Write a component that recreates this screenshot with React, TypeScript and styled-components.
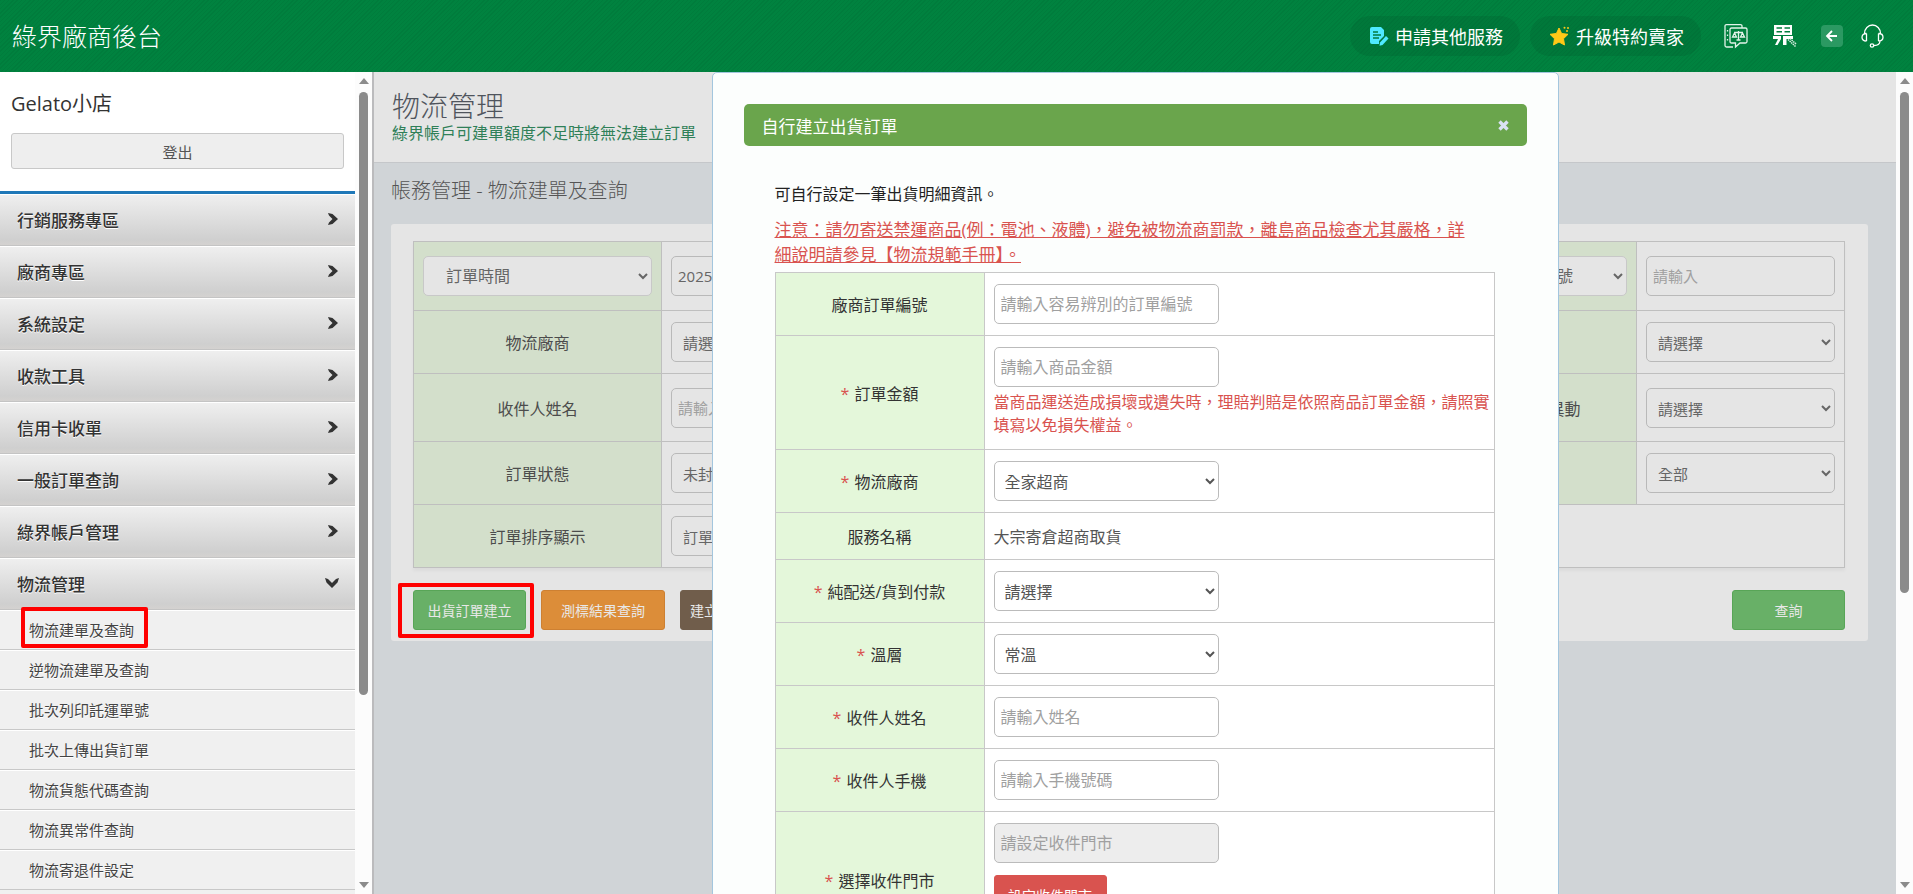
import React from "react";
import styled, { createGlobalStyle, css } from "styled-components";

const GlobalStyle = createGlobalStyle`
  * { box-sizing: border-box; }
  body { margin: 0; overflow: hidden; }
  body, button, input, select {
    font-family: "Open Sans", "Noto Sans CJK TC", sans-serif;
  }
`;

const Page = styled.div`
  display: flex;
  flex-direction: column;
  height: 100vh;
  background: #fff;
  color: #333;
  font-size: 16px;
`;

const TopBar = styled.header`
  display: flex;
  align-items: center;
  flex: none;
  height: 72px;
  padding: 0 29px 0 12px;
  background: repeating-linear-gradient(135deg, #007c3c 0 1px, #00823f 1px 3px);
  color: #fff;
`;

const Brand = styled.h1`
  flex: 1;
  margin: 0;
  font-size: 25px;
  font-weight: 300;
  line-height: 32px;
`;

const PillButton = styled.button`
  display: flex;
  align-items: center;
  gap: 6px;
  height: 40px;
  margin-right: 10px;
  padding: 0 17px 0 20px;
  border: 0;
  border-radius: 20px;
  background: rgba(0, 70, 40, 0.16);
  color: #fff;
  font-size: 18px;
  white-space: nowrap;
`;

const TopIcons = styled.div`
  display: grid;
  grid-template-columns: 49px 48px 40px 23px;
  align-items: center;
  margin-left: 13px;
`;

const IconButton = styled.button`
  display: flex;
  padding: 0;
  border: 0;
  background: none;
`;

const Body = styled.div`
  display: flex;
  flex: 1;
  min-height: 0;
`;

const Sidebar = styled.aside`
  flex: none;
  width: 355px;
  overflow: hidden;
  background: #f0f0f0;
`;

const Account = styled.div`
  display: flex;
  flex-direction: column;
  gap: 14px;
  height: 122px;
  padding: 17px 11px 0;
  border-bottom: 3px solid #1f78b8;
  background: #fff;
`;

const ShopName = styled.div`
  font-size: 20px;
  line-height: 30px;
`;

const LogoutButton = styled.button`
  height: 36px;
  border: 1px solid #c8c8c8;
  border-radius: 3px;
  background: #eee;
  color: #555;
  font-size: 15px;
`;

const MenuItem = styled.button`
  display: flex;
  align-items: center;
  justify-content: space-between;
  width: 100%;
  height: 52px;
  padding: 0 16px 2px 17px;
  border: 0;
  border-top: 1px solid #fff;
  border-bottom: 1px solid #c4c4c4;
  background: linear-gradient(#efefef, #cfcfcf 90%, #d4d2d0);
  color: #333;
  font-size: 17px;
  font-weight: 500;
  text-shadow: 0 1px 0 #fff;
`;

const SubLink = styled.a`
  display: block;
  height: 40px;
  padding-left: 29px;
  border-top: 1px solid #fff;
  border-bottom: 1px solid #c8c8c8;
  background: #f0f0f0;
  color: #444;
  font-size: 15px;
  line-height: 38px;
  text-decoration: none;
  text-shadow: 0 1px 0 #fff;
`;

const Mark = styled.span`
  position: relative;
  display: inline-block;
`;

const MarkFrame = styled.span<{ $inset: string }>`
  position: absolute;
  inset: ${(p) => p.$inset};
  border: 4px solid #f00;
  border-radius: 2px;
  pointer-events: none;
`;

const Track = styled.div`
  display: flex;
  flex-direction: column;
  align-items: center;
  flex: none;
  width: 17px;
  padding: 6px 0;
  background: #fcfcfc;
`;

const Thumb = styled.div<{ $share: string }>`
  flex: none;
  width: 9px;
  height: ${(p) => p.$share};
  margin: 8px 0 auto;
  border-radius: 5px;
  background: #8b8b8b;
`;

const Arrow = styled.span<{ $down?: boolean }>`
  border: 5px solid transparent;
  border-top: 0;
  border-bottom: 6px solid #8b8b8b;
  ${(p) => p.$down && css`
    border-top: 6px solid #8b8b8b;
    border-bottom: 0;
  `}
`;

const Stage = styled.div`
  position: relative;
  flex: 1;
  min-width: 0;
  overflow: hidden;
  border-left: 2px solid #bbbbbd;
  background: #d0d4d7;
`;

const PageHead = styled.div`
  height: 91px;
  padding: 17px 18px 0;
  border-bottom: 1px solid #c5c7ca;
  background: #e5e5e5;
`;

const PageTitle = styled.h2`
  margin: 0;
  color: #4f545c;
  font-size: 28px;
  font-weight: 300;
  line-height: 34px;
`;

const PageNote = styled.p`
  margin: 0;
  color: #2f8058;
  font-size: 16px;
  line-height: 20px;
`;

const Section = styled.section`
  padding: 13px 28px 0 17px;
`;

const SectionTitle = styled.h3`
  margin: 0 0 18px;
  color: #555;
  font-size: 20px;
  font-weight: 300;
  line-height: 30px;
`;

const Panel = styled.form`
  padding: 17px 23px 11px 22px;
  border-radius: 3px;
  background: #e5e5e5;
`;

const FilterTable = styled.table`
  width: 100%;
  border-collapse: collapse;
  table-layout: fixed;
  box-shadow: 0 3px 3px rgba(0, 0, 0, 0.04);

  th, td { border: 1px solid #bfbfbf; }
  th {
    padding: 0 9px;
    background: #d3dfcb;
    color: #4c4c4c;
    font-weight: 400;
  }
  td { padding: 0 9px; }
`;

const FilterRow = styled.tr<{ $height?: number }>`
  height: ${(p) => p.$height ?? 63}px;
`;

const field = css`
  display: block;
  width: 100%;
  height: 40px;
  border: 1px solid #b9b9b9;
  border-radius: 5px;
  background: transparent;
  color: #666;
  font-size: 15px;
  &::placeholder { color: #a0a0a0; }
`;

const TextField = styled.input`
  ${field}
  padding: 0 6px;
`;

const SelectField = styled.select<{ $head?: boolean; $short?: boolean }>`
  ${field}
  padding: 2px 20px 0 7px;
  ${(p) => p.$short && css`
    width: 225px;
  `}
  ${(p) => p.$head && css`
    padding: 0 20px 0 18px;
    border-color: #c8c8c8;
    background: #e5e5e5;
    font-size: 16px;
  `}
`;

const Actions = styled.div`
  display: flex;
  gap: 15px;
  margin-top: 22px;
`;

const tones = {
  green: ["#68b067", "#58a557"],
  orange: ["#dc8d39", "#cd8032"],
  brown: ["#705d4b", "#705d4b"],
  red: ["#d9534f", "#d9534f"],
};

const ActionButton = styled.button<{ $tone: keyof typeof tones; $width?: number }>`
  height: 40px;
  width: ${(p) => p.$width ?? 113}px;
  border: 1px solid ${(p) => tones[p.$tone][1]};
  border-radius: 3px;
  padding: 0;
  background: ${(p) => tones[p.$tone][0]};
  color: ${(p) => (p.$tone === "red" ? "#fff" : "#e8e8e8")};
  font-size: 14px;
`;

const Spacer = styled.span`
  flex: 1;
`;

const Backdrop = styled.div`
  position: absolute;
  inset: 0;
  display: flex;
  justify-content: center;
  align-items: flex-start;
`;

const Modal = styled.div`
  width: 847px;
  max-width: 100%;
  min-height: 110%;
  padding: 31px;
  border: 1px solid #a3c6de;
  border-radius: 5px;
  background: #fcfefd;
`;

const ModalHead = styled.div`
  display: flex;
  align-items: center;
  justify-content: space-between;
  height: 42px;
  padding: 0 18px;
  border-radius: 5px;
  background: #6aa54c;
  color: #fff;
  font-size: 17px;
`;

const ModalBody = styled.div`
  padding: 36px 32px 0 31px;
`;

const Lead = styled.p`
  margin: 0 0 11px;
  color: #222;
  line-height: 24px;
`;

const Warning = styled.a`
  display: block;
  margin-bottom: 5px;
  color: #d9534f;
  font-size: 17px;
  line-height: 25px;
`;

const OrderTable = styled.table`
  width: 100%;
  border-collapse: collapse;
  table-layout: fixed;

  th, td { border: 1px solid #c8c8c8; }
  th {
    width: 209px;
    padding: 0;
    background: #e4f7da;
    font-weight: 400;
  }
  td {
    padding: 11px 0 11px 9px;
    background: #fff;
    color: #555;
  }
`;

const OrderInput = styled.input`
  ${field}
  width: 225px;
  border-color: #bbb;
  padding: 0 6px;
  font-size: 16px;
  &:disabled { background: #ededed; }
`;

const OrderSelect = styled.select`
  ${field}
  width: 225px;
  border-color: #bbb;
  padding: 2px 20px 0 6px;
  color: #555;
  font-size: 16px;
`;

const Help = styled.p`
  margin: 4px 0 1px;
  color: #d9534f;
  line-height: 23px;
`;

const Star = styled.span`
  margin-right: 5px;
  color: #d9534f;
`;

const StoreActions = styled.div`
  margin: 12px 0 22px;
`;

const menu = ["行銷服務專區", "廠商專區", "系統設定", "收款工具", "信用卡收單", "一般訂單查詢", "綠界帳戶管理"];
const submenu = ["逆物流建單及查詢", "批次列印託運單號", "批次上傳出貨訂單", "物流貨態代碼查詢", "物流異常件查詢", "物流寄退件設定"];

const Chevron = ({ down }: { down?: boolean }) => (
  <svg width="14" height="14" viewBox="0 0 14 14" fill="#333">
    {down ? <path d="M0 2 L3 3 L7 7 L11 3 L14 2 L12.5 6.5 L7 12 L1.500 6.500 Z" /> : <path d="M3 1 L7.500 2 L13 7 L7.500 12 L3 13 L4 10.500 L7.500 7 L4 3.500 Z" />}
  </svg>
);

const FormIcon = () => (
  <svg width="19" height="20" viewBox="0 0 19 20">
    <path d="M2 1h9l3 3v6l-5 5v3H2a2 2 0 0 1-2-2V3a2 2 0 0 1 2-2z" fill="#4fe9ff" />
    <path d="M3 6h5M3 9h8M3 12h6" stroke="#047a42" strokeWidth="1.500" />
    <path d="M16 10l2.500 2.500-6 6.500-3 .8.500-3.300z" fill="#4fe9ff" />
  </svg>
);

const StarIcon = () => (
  <svg width="20" height="20" viewBox="0 0 20 20" fill="#ffc917">
    <path d="M9 2l2.600 5.500 6.400.8-4.500 4.400 1 6.300L9 16l-5.500 3 1-6.300L0 8.300l6.400-.8z" stroke="#ffc917" strokeLinejoin="round" />
    <circle cx="14.500" cy="1.700" r="1" /><circle cx="18" cy="2" r="1" /><circle cx="17" cy="5" r="1" />
  </svg>
);

const LawIcon = () => (
  <svg width="24" height="26" viewBox="0 0 24 26" fill="none" stroke="#e3f3ea" strokeWidth="1.300">
    <path d="M18 4.500V3Q18 1.700 16.500 1.700h-14Q1 1.700 1 3v19.500Q1 24 2.500 24H9M7.500 5h14Q23 5 23 6.500v12Q23 20 21.500 20H16l-4.500 4V20H7.500Q6 20 6 18.500v-12Q6 5 7.500 5z" />
    <path d="M14.500 8v9M10 9.500h9M12.500 17h4M10.500 10l-2 4h4zM18.500 10l-2 4h4z" />
    <path d="M3.500 7v11" strokeDasharray="1.500 3" />
  </svg>
);

const TableIcon = () => (
  <svg width="24" height="26" viewBox="0 0 24 26">
    <path d="M1 2h18v10H1zM0 13h8v3L4.500 22H2l3-6H0zM10 13h10v3h-6.500v6H10z" fill="#fff" />
    <path d="M3.500 5h5.500M11.500 5H17M3.500 8.800h5.500M11.500 8.800H17" stroke="#007f3d" strokeWidth="1.600" />
    <path d="M15 16.500l7.500 7M17 15.500l6 5.500" stroke="#d5ecdf" strokeWidth="1.600" strokeDasharray="1.500 .7" />
  </svg>
);

const BackIcon = () => (
  <svg width="22" height="24" viewBox="0 0 22 24">
    <rect y="1" width="22" height="22" rx="4" fill="#2b9962" />
    <path d="M16 12H6.500M11 7l-5 5 5 5" fill="none" stroke="#fff" strokeWidth="1.800" />
  </svg>
);

const HeadsetIcon = () => (
  <svg width="23" height="24" viewBox="0 0 23 24" fill="none" stroke="#fff" strokeWidth="1.300">
    <path d="M3.500 9.500a8 8.500 0 0 1 16 0M5.500 9.500v7.500M5.500 9.500Q1 9.500 1 13.200T5.500 17M17.500 9.500v7.500M17.500 9.500Q22 9.500 22 13.200T17.500 17M19 17.500Q18.500 21.500 13 21.500" />
    <circle cx="11" cy="21.500" r="1.700" />
  </svg>
);

const CloseIcon = () => (
  <svg width="11" height="11" viewBox="0 0 11 11" stroke="#d9e2f3" strokeWidth="3.400">
    <path d="M1.500 1.500l8 8M9.500 1.500l-8 8" />
  </svg>
);

const Scrollbar = ({ share }: { share: string }) => (
  <Track aria-hidden="true">
    <Arrow />
    <Thumb $share={share} />
    <Arrow $down />
  </Track>
);

const Choice = ({ label, text, head, short }: { label: string; text: string; head?: boolean; short?: boolean }) => (
  <SelectField aria-label={label} $head={head} $short={short}>
    <option>{text}</option>
  </SelectField>
);

const OrderTr = styled.tr<{ $height: number }>`
  height: ${(p) => p.$height}px;
`;

const OrderRow = ({ id, label, required, height = 63, children }: { id: string; label: string; required?: boolean; height?: number; children: React.ReactNode }) => (
  <OrderTr $height={height}>
    <th scope="row">
      <label htmlFor={id}>{required && <Star>*</Star>}{label}</label>
    </th>
    <td>{children}</td>
  </OrderTr>
);

export default function App() {
  return (
    <Page lang="zh-Hant">
      <GlobalStyle />
      <TopBar>
        <Brand>綠界廠商後台</Brand>
        <PillButton><FormIcon />申請其他服務</PillButton>
        <PillButton><StarIcon />升級特約賣家</PillButton>
        <TopIcons>
          <IconButton aria-label="條款"><LawIcon /></IconButton>
          <IconButton aria-label="表單"><TableIcon /></IconButton>
          <IconButton aria-label="返回"><BackIcon /></IconButton>
          <IconButton aria-label="客服"><HeadsetIcon /></IconButton>
        </TopIcons>
      </TopBar>
      <Body>
        <Sidebar>
          <Account>
            <ShopName>Gelato小店</ShopName>
            <LogoutButton>登出</LogoutButton>
          </Account>
          <nav>
            {menu.map((m) => <MenuItem key={m}>{m}<Chevron /></MenuItem>)}
            <MenuItem>物流管理<Chevron down /></MenuItem>
            <SubLink href="#create">
              <Mark>物流建單及查詢<MarkFrame $inset="-4px -14px 1px -8px" /></Mark>
            </SubLink>
            {submenu.map((s) => <SubLink key={s} href="#sub">{s}</SubLink>)}
          </nav>
        </Sidebar>
        <Scrollbar share="603px" />
        <Stage>
          <PageHead>
            <PageTitle>物流管理</PageTitle>
            <PageNote>綠界帳戶可建單額度不足時將無法建立訂單</PageNote>
          </PageHead>
          <Section>
            <SectionTitle>帳務管理 - 物流建單及查詢</SectionTitle>
            <Panel>
              <FilterTable>
                <colgroup>
                  <col width="248" /><col /><col width="208" /><col width="208" />
                </colgroup>
                <tbody>
                  <FilterRow $height={69}>
                    <th><Choice label="時間類型" text="訂單時間" head /></th>
                    <td><TextField aria-label="日期" defaultValue="2025-01-01" /></td>
                    <th><Choice label="編號類型" text="綠界物流訂單號" head /></th>
                    <td><TextField aria-label="編號" placeholder="請輸入" /></td>
                  </FilterRow>
                  <FilterRow>
                    <th scope="row">物流廠商</th>
                    <td><Choice label="物流廠商" text="請選擇" /></td>
                    <th scope="row">類型</th>
                    <td><Choice label="類型" text="請選擇" /></td>
                  </FilterRow>
                  <FilterRow $height={68}>
                    <th scope="row">收件人姓名</th>
                    <td><TextField aria-label="收件人姓名" placeholder="請輸入" /></td>
                    <th scope="row">物流狀態異動</th>
                    <td><Choice label="物流狀態異動" text="請選擇" /></td>
                  </FilterRow>
                  <FilterRow>
                    <th scope="row">訂單狀態</th>
                    <td><Choice label="訂單狀態" text="未封存" /></td>
                    <th scope="row">狀態</th>
                    <td><Choice label="狀態" text="全部" /></td>
                  </FilterRow>
                  <FilterRow>
                    <th scope="row">訂單排序顯示</th>
                    <td colSpan={3}><Choice label="訂單排序顯示" text="訂單時間" short /></td>
                  </FilterRow>
                </tbody>
              </FilterTable>
              <Actions>
                <Mark>
                  <ActionButton type="button" $tone="green">出貨訂單建立</ActionButton>
                  <MarkFrame $inset="-7px -8px -8px -15px" />
                </Mark>
                <ActionButton type="button" $tone="orange" $width={124}>測標結果查詢</ActionButton>
                <ActionButton type="button" $tone="brown" $width={104}>建立測標資料</ActionButton>
                <Spacer />
                <ActionButton type="button" $tone="green">查詢</ActionButton>
              </Actions>
            </Panel>
          </Section>
          <Backdrop>
            <Modal role="dialog" aria-label="自行建立出貨訂單">
              <ModalHead>
                自行建立出貨訂單
                <IconButton aria-label="關閉"><CloseIcon /></IconButton>
              </ModalHead>
              <ModalBody>
                <Lead>可自行設定一筆出貨明細資訊。</Lead>
                <Warning href="#manual">
                  注意：請勿寄送禁運商品(例：電池、液體)，避免被物流商罰款，離島商品檢查尤其嚴格，詳
                  <br />
                  細說明請參見【物流規範手冊】。
                </Warning>
                <OrderTable>
                  <tbody>
                    <OrderRow id="no" label="廠商訂單編號">
                      <OrderInput id="no" placeholder="請輸入容易辨別的訂單編號" />
                    </OrderRow>
                    <OrderRow id="amount" label="訂單金額" required height={114}>
                      <OrderInput id="amount" placeholder="請輸入商品金額" />
                      <Help>當商品運送造成損壞或遺失時，理賠判賠是依照商品訂單金額，請照實填寫以免損失權益。</Help>
                    </OrderRow>
                    <OrderRow id="vendor" label="物流廠商" required>
                      <OrderSelect id="vendor"><option>全家超商</option></OrderSelect>
                    </OrderRow>
                    <OrderRow id="service" label="服務名稱" height={46}>
                      <output id="service">大宗寄倉超商取貨</output>
                    </OrderRow>
                    <OrderRow id="pay" label="純配送/貨到付款" required>
                      <OrderSelect id="pay"><option>請選擇</option></OrderSelect>
                    </OrderRow>
                    <OrderRow id="temp" label="溫層" required>
                      <OrderSelect id="temp"><option>常溫</option></OrderSelect>
                    </OrderRow>
                    <OrderRow id="name" label="收件人姓名" required>
                      <OrderInput id="name" placeholder="請輸入姓名" />
                    </OrderRow>
                    <OrderRow id="phone" label="收件人手機" required>
                      <OrderInput id="phone" placeholder="請輸入手機號碼" />
                    </OrderRow>
                    <OrderRow id="store" label="選擇收件門市" required height={137}>
                      <OrderInput id="store" placeholder="請設定收件門市" disabled />
                      <StoreActions>
                        <ActionButton type="button" $tone="red">設定收件門市</ActionButton>
                      </StoreActions>
                    </OrderRow>
                  </tbody>
                </OrderTable>
              </ModalBody>
            </Modal>
          </Backdrop>
        </Stage>
        <Scrollbar share="501px" />
      </Body>
    </Page>
  );
}
